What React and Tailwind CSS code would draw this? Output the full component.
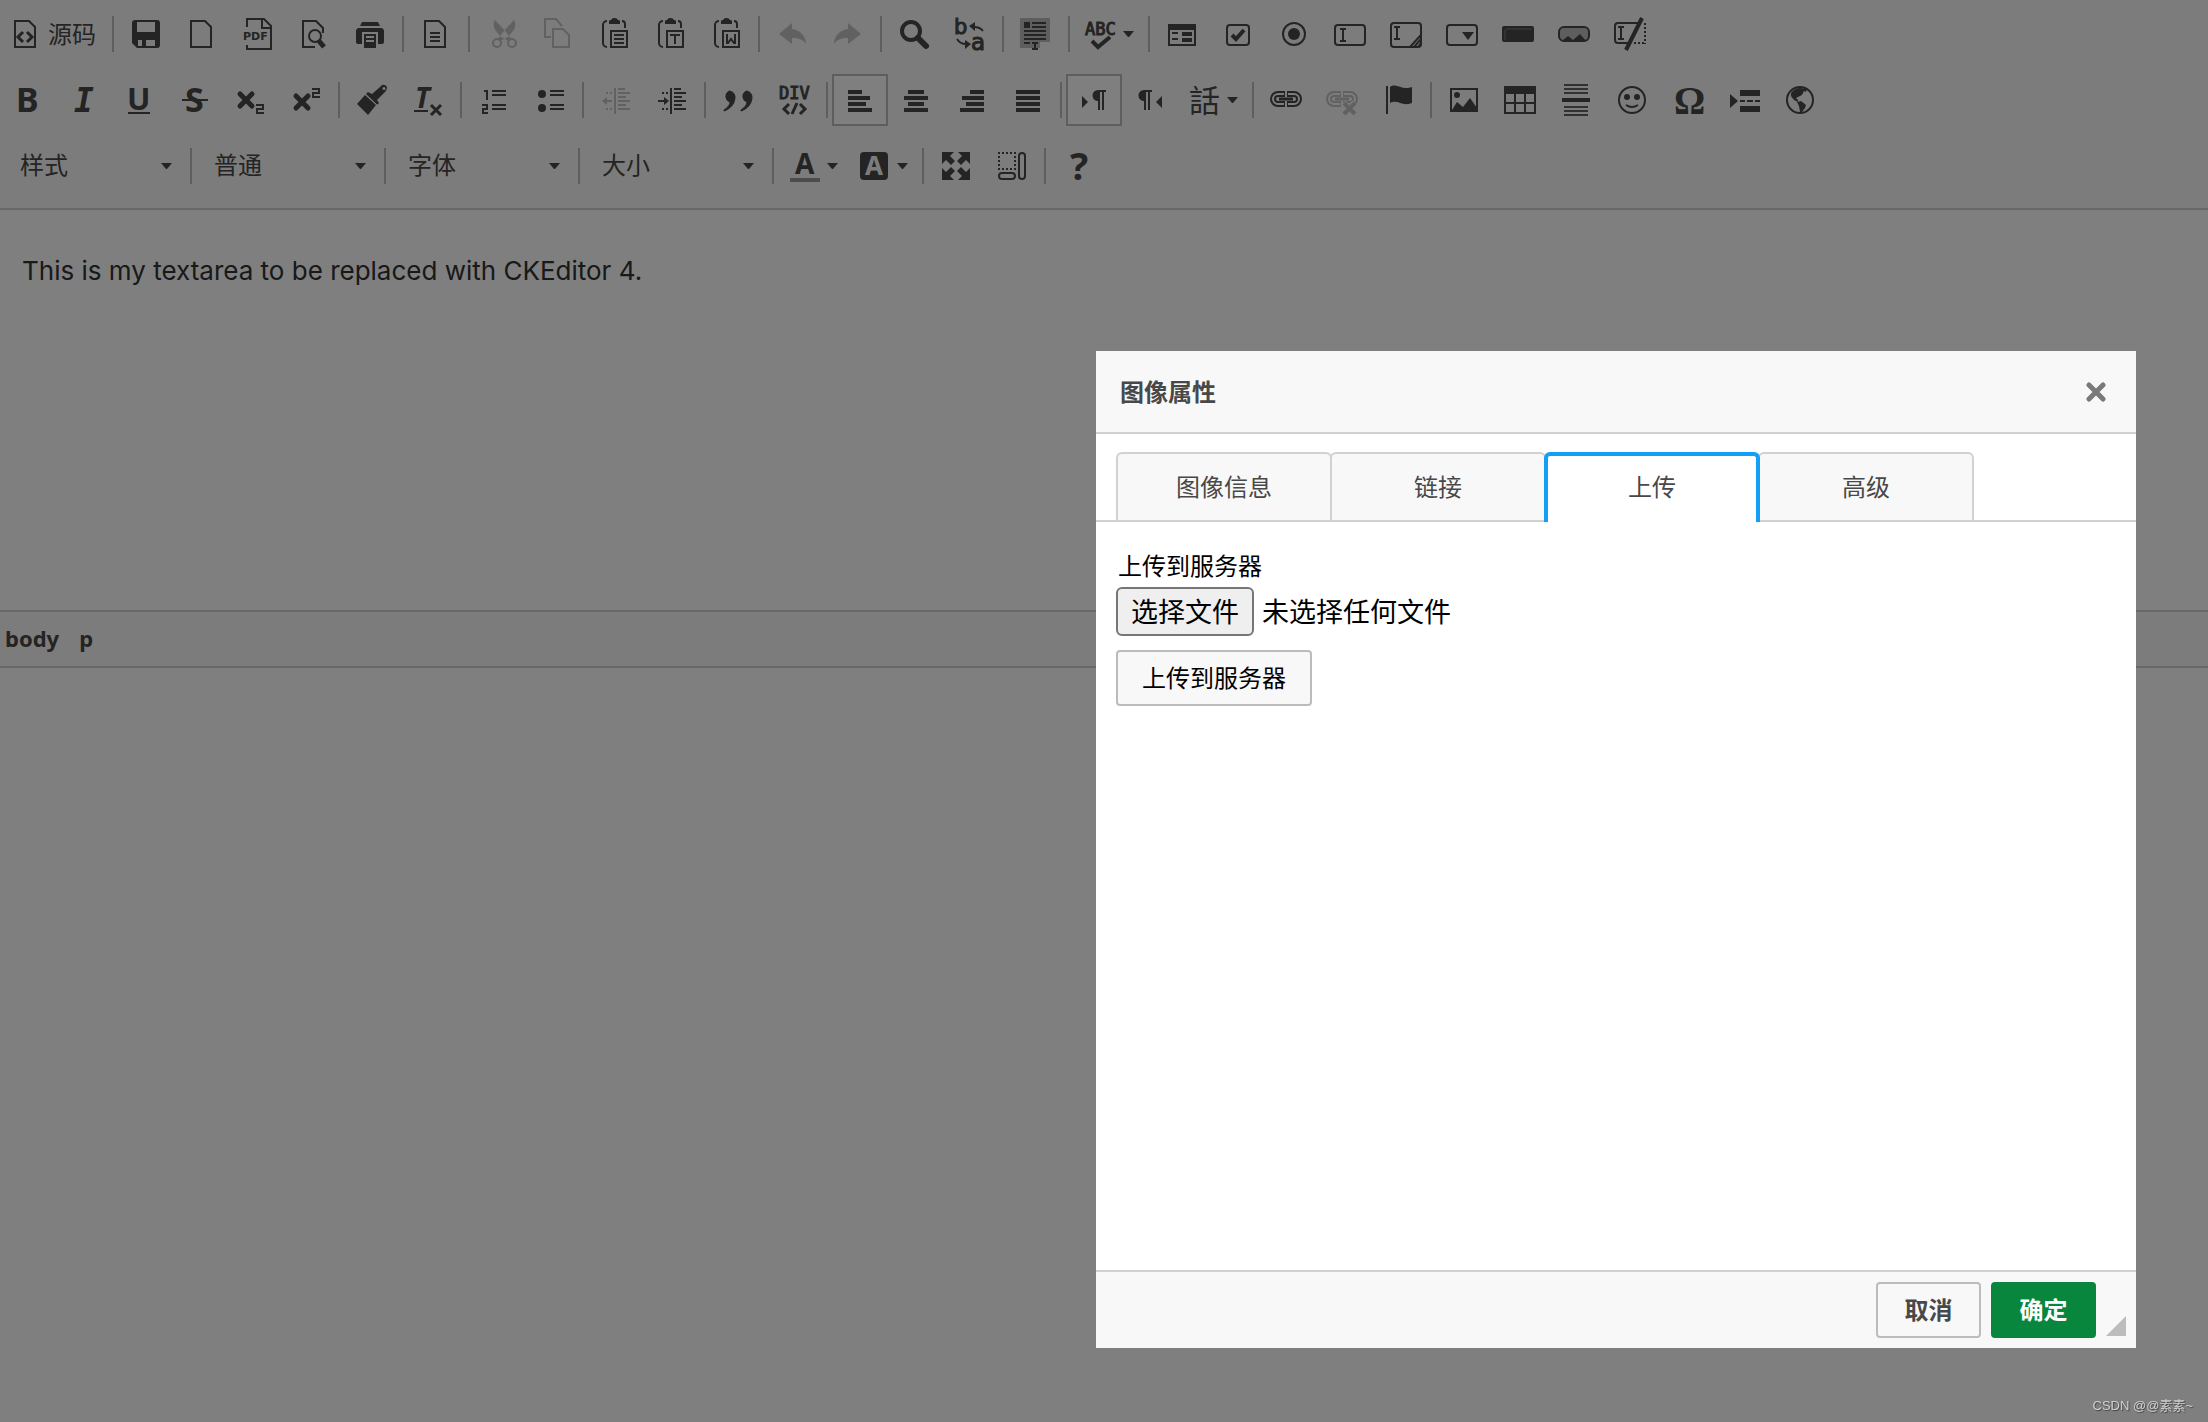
import { useState } from "react";

const SANS = "Noto Sans";
const DOC = "M5 3h14l6 6v20H5z";
const TWO = "M22 21h7v4h-6v4h7";
const CLIP = "M9 3a4 4 0 0 0-4 4v18a4 4 0 0 0 4 4M24 3a3 3 0 0 1 3 3v4";

const line = { fill: "none", stroke: "currentColor", strokeWidth: 2 };

// text label inside an icon
function T({ x, y, size, font = SANS, weight = 700, children, ...rest }) {
    return (
        <text x={x} y={y} fontSize={size} fontFamily={font} fontWeight={weight} {...rest}>
            {children}
        </text>
    );
}

function Clipboard({ children }) {
    return (
        <>
            <path d={CLIP} {...line} />
            <path d="M11 6V3q0-1 2-1 1-2 3-2h1q2 0 3 2 2 0 2 1v3z" />
            <path d="M13 13h16v16H13z" {...line} />
            {children}
        </>
    );
}

function Caret({ x, y }) {
    return <path transform={`translate(${x} ${y})`} d="M0 1h6M0 13h6M3 1v12" {...line} />;
}

function Chain() {
    return (
        <>
            <path d="M15 10H8a5 5 0 0 0 0 10h7M17 10h7a5 5 0 0 1 0 10h-7" fill="none" stroke="currentColor" strokeWidth="6" />
            <path d="M14 10H8a5 5 0 0 0 0 10h6M18 10h6a5 5 0 0 1 0 10h-6" fill="none" stroke="#f8f8f8" strokeWidth="2" />
            <path d="M9 15h14" fill="none" stroke="currentColor" strokeWidth="3" />
        </>
    );
}

function Indentation() {
    return (
        <path d="M15 4v26M18 5h7M18 9h12M18 13h8M18 17h12M18 21h8M18 25h12M6 9h2M10 9h2M6 25h2M10 25h2" {...line} />
    );
}

const icons = {
    source: (
        <>
            <path d={DOC} {...line} />
            <path d="M13 14l-5 5 5 5M17 14l5 5-5 5" fill="none" stroke="currentColor" strokeWidth="3" />
        </>
    ),
    save: (
        <path fillRule="evenodd" d="M5 2h22a3 3 0 0 1 3 3v22a3 3 0 0 1-3 3H7l-5-5V5a3 3 0 0 1 3-3zM7 4v10h18V4zM8 22v6h4v-6h4v6h9v-6z" />
    ),
    newpage: <path d={DOC} {...line} />,
    pdf: (
        <>
            <path d="M5 9V1h17l7 7v23H5v-4M20 1v9h9" {...line} />
            <T x="1" y="22" size="11" font="DejaVu Sans">PDF</T>
        </>
    ),
    preview: (
        <>
            <path d="M25 15V10l-7-7H5v26h12" {...line} />
            <circle cx="17" cy="18" r="6" {...line} />
            <path d="M21 23l5 6" fill="none" stroke="currentColor" strokeWidth="5" />
        </>
    ),
    print: (
        <>
            <path d="M8 4h16l2 4H6z M4 10h24l2 2v12q0 2-2 2H4q-2 0-2-2V12z" />
            <path d="M8 27V14h16v13" fill="#f8f8f8" />
            <path d="M10 16h12v14H10z" />
            <path d="M12 19h8M12 23h8" stroke="#f8f8f8" strokeWidth="2" />
        </>
    ),
    templates: (
        <>
            <path d={DOC} {...line} />
            <path d="M10 15h10M10 19h10M10 23h10" {...line} />
        </>
    ),
    cut: (
        <>
            <circle cx="11" cy="25" r="4" {...line} />
            <circle cx="26" cy="25" r="4" {...line} />
            <path d="M9 2q-3 6 1 11l5 6 8 4 2-2-5-7zM28 2q3 6-1 11l-5 6-8 4-2-2 5-7z" />
        </>
    ),
    copy: <path d="M9 19H3V1h11l6 7M11 11h10l6 6v12H11z" {...line} />,
    paste: (
        <Clipboard>
            <path d="M16 17h10M16 21h10M16 25h10" {...line} />
        </Clipboard>
    ),
    pastetext: (
        <Clipboard>
            <path d="M16 17h10M21 17v9" {...line} />
        </Clipboard>
    ),
    pasteword: (
        <Clipboard>
            <path d="M17 16v9h1l3-4 3 4h1v-9" {...line} />
        </Clipboard>
    ),
    undo: <path d="M3 16L16 5v6c8 1 14 7 14 15-3-5-8-6-14-6v6z" />,
    redo: <path d="M29 16L16 5v6C8 12 2 18 2 26c3-5 8-6 14-6v6z" />,
    find: (
        <>
            <circle cx="13" cy="13" r="9" fill="none" stroke="currentColor" strokeWidth="4" />
            <path d="M20 20l8 8" fill="none" stroke="currentColor" strokeWidth="6" strokeLinecap="round" />
        </>
    ),
    replace: (
        <>
            <T x="0" y="16" size="21" font="DejaVu Sans" weight="400" stroke="currentColor">b</T>
            <T x="17" y="32" size="23" font="DejaVu Sans" weight="400" stroke="currentColor">a</T>
            <path d="M29 13q-3-4-9-4M3 21q3 5 9 5" {...line} />
            <path d="M15 8l6-4v9zM17 26l-6-4v9z" />
        </>
    ),
    selectall: (
        <>
            <path d="M0 0h30v24H20v6H0z" fill="#bcbcbc" />
            <path d="M4 4h6v6H4z" />
            <path d="M12 5h14M12 9h14M4 13h22M4 17h22M4 21h22M4 25h6M12 25h6M12 31h6M15 24v7" {...line} />
        </>
    ),
    scayt: (
        <>
            <T x="-1" y="17" size="17" font="DejaVu Sans Mono" weight="400" stroke="currentColor">ABC</T>
            <path d="M6 23l6 6L24 19" fill="none" stroke="currentColor" strokeWidth="4" />
        </>
    ),
    form: (
        <>
            <path d="M3 7h26v20H3z" {...line} />
            <path d="M2 6h28v6H2zM6 14h6v2H6zM6 20h6v2H6zM16 14h10v4H16zM16 20h10v4H16z" />
        </>
    ),
    checkbox: (
        <>
            <rect x="5" y="7" width="22" height="20" rx="3" {...line} />
            <path d="M10 17l4 4 8-9" fill="none" stroke="currentColor" strokeWidth="4" />
        </>
    ),
    radio: (
        <>
            <circle cx="16" cy="16" r="11" {...line} />
            <circle cx="16" cy="16" r="6" />
        </>
    ),
    textfield: (
        <>
            <rect x="1" y="7" width="30" height="20" rx="3" {...line} />
            <Caret x={6} y={10} />
        </>
    ),
    textarea: (
        <>
            <rect x="1" y="5" width="30" height="24" rx="3" {...line} />
            <Caret x={4} y={8} />
            <path d="M20 29l11-12M24 29l7-8M28 29l3-4" {...line} />
        </>
    ),
    select: (
        <>
            <rect x="1" y="7" width="30" height="20" rx="3" {...line} />
            <path d="M16 14h12l-6 8z" />
        </>
    ),
    button: (
        <>
            <rect x="0" y="8" width="32" height="16" rx="2" />
            <path d="M3 22v-9q0-2 2-2h25" fill="none" stroke="#808080" strokeWidth="1" />
        </>
    ),
    imagebutton: (
        <>
            <rect x="1" y="9" width="30" height="14" rx="5" fill="#bcbcbc" stroke="currentColor" strokeWidth="2" />
            <path d="M4 23l6-5 5 4 7-6 6 7z" />
        </>
    ),
    hidden: (
        <>
            <path d="M24 5H4Q1 5 1 8v14q0 3 3 3h10" {...line} />
            <path d="M31 5v21M20 25h12" strokeDasharray="2 2" {...line} />
            <Caret x={4} y={8} />
            <path d="M28 0L12 32" fill="none" stroke="currentColor" strokeWidth="4" />
        </>
    ),
    bold: <T x="6" y="28" size="34">B</T>,
    italic: <T x="8" y="28" size="33" font="DejaVu Sans Mono" fontStyle="italic">I</T>,
    underline: (
        <>
            <T x="5" y="26" size="31">U</T>
            <path d="M6 29h22" {...line} />
        </>
    ),
    strike: (
        <>
            <T x="7" y="28" size="34">S</T>
            <path d="M4 16h26" {...line} />
        </>
    ),
    sub: (
        <>
            <path d="M6 10l12 12M18 10L6 22" fill="none" stroke="currentColor" strokeWidth="5" strokeLinecap="round" />
            <path d={TWO} {...line} />
        </>
    ),
    sup: (
        <>
            <path d="M6 12l12 12M18 12L6 24" fill="none" stroke="currentColor" strokeWidth="5" strokeLinecap="round" />
            <path d="M22 5h7v4h-6v4h7" {...line} />
        </>
    ),
    brush: (
        <>
            <path fillRule="evenodd" d="M26 1q3-1 5 2 0 3-2 5l-8 8 2 3-2 2L10 10l2-2 4 2 8-7zM28 3a1 1 0 1 0 0 3 1 1 0 0 0 0-3z" />
            <path d="M9 11l11 10-8 10L1 20z" />
            <path d="M9 10l12 11" stroke="#f8f8f8" strokeWidth="1" />
        </>
    ),
    removeformat: (
        <>
            <T x="3" y="24" size="28" fontStyle="italic">T</T>
            <path d="M2 27h14" {...line} />
            <path d="M19 21l10 10M29 21L19 31" fill="none" stroke="currentColor" strokeWidth="3" />
        </>
    ),
    numbered: (
        <>
            <path d="M6 7h3v9M4 21h5v4H5v4h5" {...line} />
            <path d="M14 7h14M14 11h14M14 21h14M14 25h14" {...line} />
        </>
    ),
    bulleted: (
        <>
            <circle cx="8" cy="10" r="4" />
            <circle cx="8" cy="24" r="4" />
            <path d="M16 7h14M16 11h14M16 21h14M16 25h14" {...line} />
        </>
    ),
    outdent: (
        <>
            <Indentation />
            <path d="M2 17l5-4v3h5v2H7v3z" />
        </>
    ),
    indent: (
        <>
            <Indentation />
            <path d="M13 17l-5-4v3H2v2h6v3z" />
        </>
    ),
    quote: (
        <path d="M8 7a6 6 0 0 1 6 6c0 7-5 12-11 14v-1c4-3 6-5 6-8a6 6 0 0 1-1-11zM25 7a6 6 0 0 1 6 6c0 7-5 12-11 14v-1c4-3 6-5 6-8a6 6 0 0 1-1-11z" transform="translate(-1 0)" stroke="currentColor" strokeWidth="1" />
    ),
    div: (
        <>
            <T x="1" y="15" size="17" font="DejaVu Sans Mono" weight="400" stroke="currentColor">DIV</T>
            <path d="M11 20l-5 5 5 5M22 20l5 5-5 5M19 19l-5 11" fill="none" stroke="currentColor" strokeWidth="3" />
        </>
    ),
    left: <path d="M4 6h14v4H4zM4 12h22v4H4zM4 18h18v4H4zM4 24h24v4H4z" />,
    center: <path d="M8 6h16v4H8zM4 12h24v4H4zM8 18h16v4H8zM4 24h24v4H4z" />,
    right: <path d="M14 6h14v4H14zM6 12h22v4H6zM10 18h18v4H10zM4 24h24v4H4z" />,
    justify: <path d="M4 6h24v4H4zM4 12h24v4H4zM4 18h24v4H4zM4 24h24v4H4z" />,
    ltr: (
        <>
            <path d="M4 12l6 6-6 6z" />
            <path d="M28 6v2h-2v18h-2V8h-2v18h-2v-9a5 5 0 0 1 0-11z" />
        </>
    ),
    rtl: (
        <>
            <path d="M28 12l-6 6 6 6z" />
            <path d="M18 6v2h-2v18h-2V8h-2v18h-2v-9a5 5 0 0 1 0-11z" />
        </>
    ),
    language: <T x="-1" y="28" size="31" font="Noto Sans CJK SC" weight="400">話</T>,
    link: <Chain />,
    unlink: (
        <>
            <Chain />
            <path d="M17 19l12 12M29 19L17 31" stroke="#f8f8f8" strokeWidth="7" />
            <path d="M18 19l11 11M29 19L18 30" stroke="currentColor" strokeWidth="4" />
        </>
    ),
    anchor: <path d="M4 2h2v28H4zM8 3c7-5 11 4 22 0v16c-11 4-13-4-22 0z" />,
    image: (
        <>
            <path d="M3 5h26v22H3z" {...line} />
            <circle cx="9" cy="11" r="3" />
            <path d="M4 26l5-8 6 5 7-9 7 10v3H4z" />
        </>
    ),
    table: (
        <>
            <path d="M1 3h30v26H1zM11 8v21M21 8v21M1 19h30" {...line} />
            <path d="M0 2h32v8H0z" />
        </>
    ),
    hr: (
        <>
            <path d="M4 1h24M4 5h24M4 9h24M4 23h24M4 27h24M4 31h24" {...line} opacity=".85" />
            <path d="M2 14h28v4H2z" />
        </>
    ),
    smiley: (
        <>
            <circle cx="16" cy="16" r="13" {...line} />
            <ellipse cx="11" cy="13" rx="3" ry="3" />
            <ellipse cx="21" cy="13" rx="3" ry="3" />
            <path d="M10 21q6 4 12 0" {...line} />
        </>
    ),
    omega: <T x="2" y="30" size="39" font="Liberation Serif">Ω</T>,
    pagebreak: <path d="M2 10l8 7-8 7zM12 6h20v6H12zM12 22h20v6H12zM12 16h5v2h-5zM19 16h6v2h-6zM27 16h5v2h-5z" />,
    globe: (
        <>
            <circle cx="16" cy="16" r="13" {...line} />
            <path d="M7 9q4-5 9-5l7 1-1 3-2-1-2 4-4 2-2 1 2 2v2l-4-2-3-4z" />
            <path d="M13 18l4-1 5 4-1 3-3 4h-2l-1-6z" />
        </>
    ),
    textcolor: (
        <>
            <T x="5" y="24" size="28" font="Noto Sans">A</T>
            <path d="M0 28h30v4H0z" fill="#999" />
        </>
    ),
    bgcolor: (
        <>
            <rect x="0" y="2" width="28" height="28" rx="4" />
            <T x="5" y="25" size="26" fill="#f8f8f8">A</T>
        </>
    ),
    maximize: (
        <path d="M2 2h12l-4 4 5 5-4 4-5-5-4 4zM30 2v12l-4-4-5 5-4-4 5-5-4-4zM2 30V18l4 4 5-5 4 4-5 5 4 4zM30 30H18l4-4-5-5 4-4 5 5 4-4z" />
    ),
    showblocks: (
        <>
            <path d="M2 3h18M2 19h18M3 6v12M19 6v12" strokeDasharray="2 2" {...line} />
            <rect x="23" y="3" width="6" height="26" rx="3" {...line} />
            <rect x="3" y="23" width="16" height="6" rx="3" {...line} />
        </>
    ),
    about: <T x="8" y="30" size="38">?</T>,
};

// each entry: [icon, title, flags]
const row1 = [
    [["source", "源码", "label"]],
    [["save", "保存"], ["newpage", "新建"], ["pdf", "导出为 PDF"], ["preview", "预览"], ["print", "打印"]],
    [["templates", "模板"]],
    [["cut", "剪切", "off"], ["copy", "复制", "off"], ["paste", "粘贴"], ["pastetext", "粘贴为无格式文本"], ["pasteword", "从 MS Word 粘贴"]],
    [["undo", "撤消", "off"], ["redo", "重做", "off"]],
    [["find", "查找"], ["replace", "替换"]],
    [["selectall", "全选"]],
    [["scayt", "即时拼写检查", "menu"]],
    [["form", "表单"], ["checkbox", "复选框"], ["radio", "单选按钮"], ["textfield", "单行文本"], ["textarea", "多行文本"], ["select", "列表/菜单"], ["button", "按钮"], ["imagebutton", "图像按钮"], ["hidden", "隐藏域"]],
];

const row2 = [
    [["bold", "加粗"], ["italic", "倾斜"], ["underline", "下划线"], ["strike", "删除线"], ["sub", "下标"], ["sup", "上标"]],
    [["brush", "复制格式"], ["removeformat", "清除格式"]],
    [["numbered", "编号列表"], ["bulleted", "项目列表"]],
    [["outdent", "减少缩进量", "off"], ["indent", "增加缩进量"]],
    [["quote", "块引用"], ["div", "创建 DIV 容器"]],
    [["left", "左对齐", "on"], ["center", "居中"], ["right", "右对齐"], ["justify", "两端对齐"]],
    [["ltr", "文字方向为从左至右", "on"], ["rtl", "文字方向为从右至左"], ["language", "设置语言", "menu"]],
    [["link", "插入/编辑超链接"], ["unlink", "取消超链接", "off"], ["anchor", "插入/编辑锚点链接"]],
    [["image", "图像"], ["table", "表格"], ["hr", "插入水平线"], ["smiley", "表情符"], ["omega", "插入特殊符号"], ["pagebreak", "插入打印分页符"], ["globe", "IFrame"]],
];

const row3 = [
    [["textcolor", "文本颜色", "menu"], ["bgcolor", "背景颜色", "menu"]],
    [["maximize", "全屏"], ["showblocks", "显示区块"]],
    [["about", "关于 CKEditor 4"]],
];

const combos = ["样式", "普通", "字体", "大小"];
const tabs = ["图像信息", "链接", "上传", "高级"];

function Arrow({ className }) {
    return (
        <svg className={className} width="11" height="6" viewBox="0 0 11 6" fill="currentColor">
            <path d="M0 0h11L6 6H5z" />
        </svg>
    );
}

function ToolButton({ item }) {
    const [icon, title, flag] = item;
    return (
        <button
            type="button"
            title={title}
            disabled={flag === "off"}
            className={`flex h-[52px] items-center border-2 px-2.5 ${flag === "on" ? "border-[#bcbcbc] bg-white" : "border-transparent"}`}
        >
            <svg
                width="32"
                height="32"
                viewBox="0 0 32 32"
                fill="currentColor"
                className={`shrink-0 overflow-visible ${flag === "off" ? "opacity-30" : ""}`}
            >
                {icons[icon]}
            </svg>
            {flag === "label" && <span className="ml-1.5">{title}</span>}
            {flag === "menu" && <Arrow className="-mr-0.5 ml-[5px]" />}
        </button>
    );
}

function Separator() {
    return <span className="mx-1 h-9 w-0.5 shrink-0 bg-[#bcbcbc]" />;
}

function Groups({ groups }) {
    return groups.map((group, i) => (
        <div key={i} className="flex items-center">
            {i > 0 && <Separator />}
            {group.map((item) => (
                <ToolButton key={item[0]} item={item} />
            ))}
        </div>
    ));
}

function Combo({ name }) {
    return (
        <div className="flex items-center">
            <div className="relative flex items-center">
                <select aria-label={name} className="h-[52px] w-[184px] appearance-none bg-transparent pb-0.5 pl-[18px] outline-none">
                    <option>{name}</option>
                </select>
                <Arrow className="pointer-events-none absolute right-3.5" />
            </div>
            <Separator />
        </div>
    );
}

function ImageDialog() {
    const [active, setActive] = useState("上传");

    return (
        <div role="dialog" aria-labelledby="dialog-title" className="w-[1040px] bg-white text-black">
            <div className="flex h-[83px] items-center justify-between border-b-2 border-[#d1d1d1] bg-[#f8f8f8] pr-[30px] pl-6">
                <h2 id="dialog-title" className="font-bold text-[#484848]">图像属性</h2>
                <button type="button" aria-label="关闭">
                    <svg width="20" height="20" viewBox="0 0 20 20" fill="none" stroke="#7a7a7a" strokeWidth="5" strokeLinecap="round">
                        <path d="M3 3l14 14M17 3L3 17" />
                    </svg>
                </button>
            </div>

            <div role="tablist" className="flex border-b-2 border-[#d1d1d1] px-5 pt-[18px]">
                {tabs.map((tab) => (
                    <button
                        key={tab}
                        type="button"
                        role="tab"
                        aria-selected={tab === active}
                        onClick={() => setActive(tab)}
                        className={
                            tab === active
                                ? "z-10 -mr-0.5 -mb-0.5 h-[70px] w-[216px] rounded-t-md border-4 border-b-0 border-[#139ff7] bg-white pb-1 text-[#484848]"
                                : "-mr-0.5 h-[68px] w-[216px] rounded-t-md border-2 border-b-0 border-[#d1d1d1] bg-[#f8f8f8] text-[#484848]"
                        }
                    >
                        {tab}
                    </button>
                ))}
            </div>

            <div role="tabpanel" className="flex h-[748px] flex-col items-start px-5 pt-7">
                <label htmlFor="upload" className="ml-0.5 leading-8">上传到服务器</label>
                <div className="mt-[5px] flex items-center gap-2 text-[27px]">
                    <input id="upload" type="file" className="sr-only" />
                    <label htmlFor="upload" className="flex h-[49px] items-center rounded-md border-2 border-[#767676] bg-[#efefef] px-[13px]">
                        选择文件
                    </label>
                    <span>未选择任何文件</span>
                </div>
                <button type="button" className="mt-3.5 h-14 w-[196px] rounded border-2 border-[#bcbcbc] bg-[#f8f8f8]">
                    上传到服务器
                </button>
            </div>

            <div className="flex h-[78px] items-end border-t-2 border-[#d1d1d1] bg-[#f8f8f8] pr-2.5 pb-2.5">
                <div className="ml-auto flex gap-2.5 font-bold">
                    <button type="button" className="h-14 w-[105px] rounded border-2 border-[#bcbcbc] text-[#484848]">取消</button>
                    <button type="button" className="h-14 w-[105px] rounded bg-[#09863e] text-white">确定</button>
                </div>
                <svg className="mb-0.5 ml-2.5" width="20" height="20" viewBox="0 0 20 20" fill="#bcbcbc">
                    <path d="M20 0v20H0z" />
                </svg>
            </div>
        </div>
    );
}

export default function App() {
    return (
        <div className="min-h-screen overflow-hidden bg-white font-['Noto_Sans','Noto_Sans_CJK_SC',sans-serif] text-2xl text-[#484848]">
            <div className="border-b-2 border-[#d1d1d1] bg-[#f8f8f8] pt-2 pb-4">
                <div className="flex flex-col gap-3.5">
                    <div className="-ml-0.5 flex">
                        <Groups groups={row1} />
                    </div>
                    <div className="-ml-0.5 flex">
                        <Groups groups={row2} />
                    </div>
                    <div className="ml-0.5 flex">
                        {combos.map((name) => (
                            <Combo key={name} name={name} />
                        ))}
                        <Groups groups={row3} />
                    </div>
                </div>
            </div>

            <div className="h-[400px] px-[22px] py-11 font-['Inter',sans-serif] text-[26px] text-[#333]">
                <p>This is my textarea to be replaced with CKEditor 4.</p>
            </div>

            <div className="flex h-[58px] items-center gap-5 border-y-2 border-[#d1d1d1] bg-[#f8f8f8] px-[5px] text-[22px] font-bold">
                <a href="#body">body</a>
                <a href="#p">p</a>
            </div>

            {/* modal backdrop */}
            <div className="fixed inset-0 z-20 flex items-start justify-end bg-black/50 pt-[351px] pr-[72px]">
                <ImageDialog />
            </div>

            <div className="fixed right-[15px] bottom-2 z-30 font-['Liberation_Sans','Noto_Sans_CJK_SC',sans-serif] text-[13px] text-[#cfcfcf] [text-shadow:1px_1px_1px_#444]">
                CSDN @@素素~
            </div>
        </div>
    );
}
